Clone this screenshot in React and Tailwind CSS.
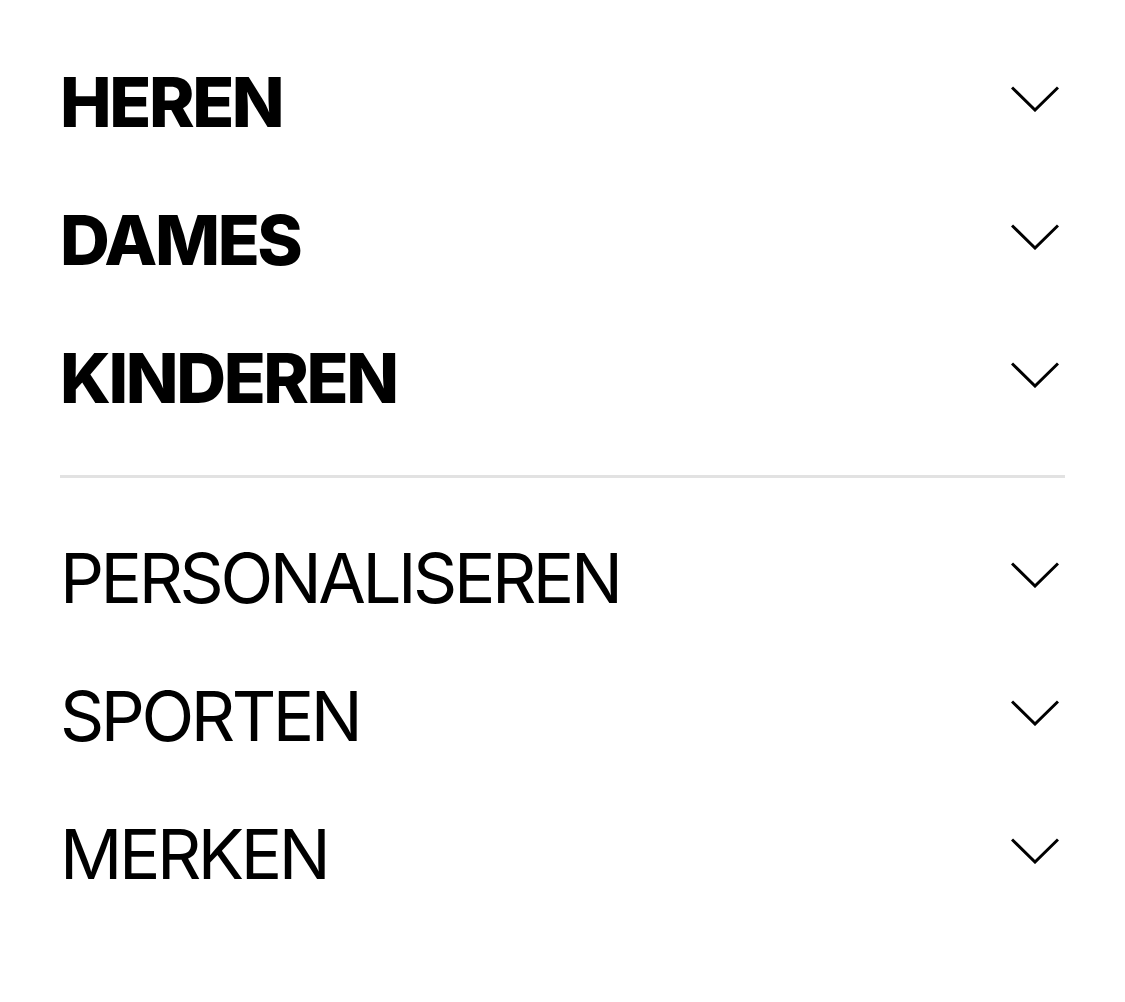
import React from "react";

const Chevron = () => (
  <svg width="48" height="26" viewBox="0 0 48 26" fill="none" className="shrink-0">
    <path d="M1 1.5 L24 24 L47 1.5" stroke="#000" strokeWidth="3" />
  </svg>
);

const Row = ({ label, bold }) => (
  <div className="flex h-[138px] items-center justify-between">
    <span
      className={`text-[69px] leading-none text-black ${
        bold ? "font-extrabold tracking-[-0.035em]" : "font-normal tracking-[-0.05em]"
      }`}
    >
      {label}
    </span>
    <div className="mr-[6px] -mt-[6px]">
      <Chevron />
    </div>
  </div>
);

export default function App() {
  return (
    <div
      className="min-h-screen bg-white px-[60px] pt-[33px]"
      style={{ fontFamily: "Inter, 'Liberation Sans', sans-serif" }}
    >
      {/* main categories */}
      <Row label="HEREN" bold />
      <Row label="DAMES" bold />
      <Row label="KINDEREN" bold />

      <div className="mt-[28px] h-[3px] bg-[#e2e2e2]" />

      {/* secondary */}
      <div className="pt-[31px]">
        <Row label="PERSONALISEREN" />
        <Row label="SPORTEN" />
        <Row label="MERKEN" />
      </div>
    </div>
  );
}
